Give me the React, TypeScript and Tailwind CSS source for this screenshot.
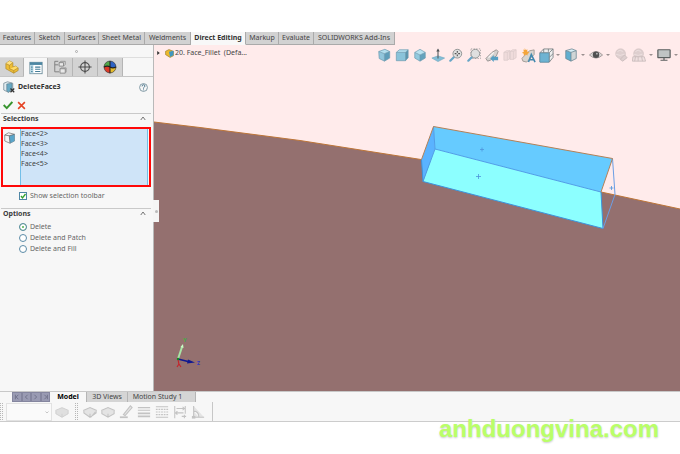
import type { ReactNode } from "react";

const ribbonTabs = [
  { name: "Features", width: "w-[35px]" },
  { name: "Sketch", width: "w-[30px]" },
  { name: "Surfaces", width: "w-[34px]" },
  { name: "Sheet Metal", width: "w-[46px]" },
  { name: "Weldments", width: "w-[46px]" },
  { name: "Direct Editing", width: "w-[55px]" },
  { name: "Markup", width: "w-[33px]" },
  { name: "Evaluate", width: "w-[35px]" },
  { name: "SOLIDWORKS Add-Ins", width: "w-[81px]" },
];

function Icon({ children, size = "size-[14px]" }: { children: ReactNode; size?: string }) {
  return (
    <svg viewBox="0 0 16 16" className={`${size} shrink-0`} fill="none" aria-hidden="true">
      {children}
    </svg>
  );
}

function Cube() {
  return (
    <Icon>
      <path d="M2 4 9 1.500 14.500 4 8.500 6.500Z" fill="#b4dfee" />
      <path d="M2 4 8.500 6.500V15L2.500 12Z" fill="#92c6dc" />
      <path d="M14.500 4 8.500 6.500V15l6-3.500Z" fill="#5f9db9" />
      <path d="M2 4 9 1.500 14.500 4v7.500l-6 3.500-6-3ZM2 4l6.500 2.500 6-2.500M8.500 6.500V15" stroke="#6b9bb0" strokeWidth=".8" />
    </Icon>
  );
}

function FrontCube() {
  return (
    <Icon>
      <path d="M1.500 5 5 2h10l-3 3Z" fill="#b4dfee" />
      <path d="M1.500 5H12v9.500H1.500Z" fill="#8ac3da" />
      <path d="M12 5l3-3v9l-3 3.500Z" fill="#5b95ae" />
      <path d="M1.500 5 5 2h10v9l-3 3.500H1.500ZM1.500 5H12l3-3M12 5v9.500" stroke="#6b9bb0" strokeWidth=".8" />
    </Icon>
  );
}

function IsoCube() {
  return (
    <Icon>
      <path d="M8 1.500 14 5 8 8 2 5Z" fill="#b9e2f0" />
      <path d="M2 5l6 3v7l-6-3.500Z" fill="#92c9de" />
      <path d="M14 5 8 8v7l6-3.500Z" fill="#65a2bd" />
      <path d="M8 1.500 14 5v6.500L8 15l-6-3.500V5ZM2 5l6 3 6-3M8 8v7" stroke="#6b9bb0" strokeWidth=".8" />
    </Icon>
  );
}

function NormalTo() {
  return (
    <Icon>
      <path d="M1 11.500 8 9l7.500 2.500L8 15.500Z" fill="#83bfd8" stroke="#6ba4bd" strokeWidth=".7" />
      <path d="M8 12V2" stroke="#505659" strokeWidth="1.200" />
      <path d="M6 4 8 .5 10 4Z" fill="#505659" />
    </Icon>
  );
}

function ZoomFit({ dashed = false }: { dashed?: boolean }) {
  return (
    <Icon>
      {dashed && <rect x="4.500" y="1" width="11" height="11" stroke="#999" strokeWidth=".9" strokeDasharray="1.500 1.500" />}
      <path d="m1.500 14.500 4-4" stroke="#67a6c7" strokeWidth="2.500" strokeLinecap="round" />
      <circle cx="9.500" cy="6.500" r="5" fill="#dfdfdf" stroke="#929595" strokeWidth="1.100" />
      {!dashed && <path d="M9.500 3.500v6M6.500 6.500h6" stroke="#555" strokeWidth="1.300" strokeDasharray="2 2" />}
    </Icon>
  );
}

function PreviousView() {
  return (
    <Icon>
      <path d="m1 12 7-7 5-3 2 2-2 5-7 5-3 1Z" fill="#d5d1cf" stroke="#918d8b" strokeWidth="1" />
      <path d="m4 11 6-6" stroke="#f7f7f7" strokeWidth="1.500" />
      <path d="m6 12 4-4v2h5v4h-5v2Z" fill="#569fc3" />
    </Icon>
  );
}

function SectionView() {
  return (
    <Icon>
      <path d="M1 5 4 3h4v9l-3 2H1Zm7-1 3-2h4v9l-3 2H8Z" fill="#efdbdb" stroke="#dacaca" strokeWidth=".8" />
      <path d="M5 5v9M12 4v9M1 5h4l3-2M8 4h4l3-2" stroke="#dacaca" strokeWidth=".7" />
    </Icon>
  );
}

function AnnotationView() {
  return (
    <Icon size="size-[15px]">
      <path d="m1 11 8-8 5-1v5l-8 8-4-1Z" fill="#d9d5d0" stroke="#9a948e" strokeWidth=".9" />
      <path d="m4 0 1 2 2-.5-.5 2L9 5l-2 1v2L5 7 3 8.500V6L1 5l2-1-.5-2.500L4 2Z" fill="#f4a53a" />
      <path d="m8 15 3-8 4 8M9.500 12.500h4" stroke="#4389ae" strokeWidth="1.700" />
    </Icon>
  );
}

function ViewOrientation() {
  return (
    <Icon size="size-[15px]">
      <path d="M1 5 5 1h10v9l-4 5H1Z" fill="#eeeeee" stroke="#777f83" strokeWidth=".9" />
      <path d="M1 5h10l4-4M11 5v10M5 1v4M10 1v3M11 10l4-4" stroke="#777f83" strokeWidth=".9" />
      <path d="M1 5.500h9.500V15H1Z" fill="#6eb3d2" stroke="#5795b2" strokeWidth=".8" />
    </Icon>
  );
}

function DisplayStyle() {
  return (
    <Icon>
      <path d="m2 3 7-2 5 2-6 2Z" fill="#d6edf5" />
      <path d="m2 3 6 2v10l-6-3Z" fill="#61aed0" />
      <path d="m14 3-6 2v10l6-3Z" fill="#d0d5d6" />
      <path d="m2 3 7-2 5 2v9l-6 3-6-3ZM2 3l6 2 6-2M8 5v10" stroke="#6b8794" strokeWidth=".9" />
    </Icon>
  );
}

function Eye() {
  return (
    <Icon>
      <path d="M.5 8Q8 0 15.500 8 8 15 .5 8Z" fill="#ddd8d7" stroke="#9a9191" />
      <circle cx="8" cy="7.800" r="3.700" fill="#505050" />
      <circle cx="9" cy="6.500" r="1" fill="#bbb" />
    </Icon>
  );
}

function FadedBall({ scene = false }: { scene?: boolean }) {
  return (
    <Icon>
      <circle cx="7.500" cy="6.500" r="5.500" fill="#decfcf" stroke="#d3c5c5" />
      <path d="M4 4q3-3 6 0M2 7q5 3 10 0" stroke="#ede0e0" />
      {scene ? (
        <path d="M1 10h13l1.500 5H.5Zm3 0-1 5m4-5v5m4-5 1 5" fill="#efe0e0" stroke="#c9bcbc" />
      ) : (
        <path d="m7 13 5-5 3 3-5 4Z" fill="#ddcfcf" stroke="#c9bcbc" />
      )}
    </Icon>
  );
}

function Monitor() {
  return (
    <Icon>
      <rect x="1" y="2" width="14" height="9" rx=".5" fill="#c0c4c4" stroke="#5c6060" strokeWidth="1.400" />
      <path d="M8 11v3M4 14h8" stroke="#5c6060" strokeWidth="1.400" />
    </Icon>
  );
}

const viewTools = [
  { name: "Shaded cube", icon: <Cube />, menu: false },
  { name: "Front view", icon: <FrontCube />, menu: false },
  { name: "Isometric view", icon: <IsoCube />, menu: false },
  { name: "Normal to", icon: <NormalTo />, menu: false },
  { name: "Zoom to fit", icon: <ZoomFit />, menu: false },
  { name: "Zoom to area", icon: <ZoomFit dashed />, menu: false },
  { name: "Previous view", icon: <PreviousView />, menu: false },
  { name: "Section view", icon: <SectionView />, menu: false },
  { name: "Annotation views", icon: <AnnotationView />, menu: false },
  { name: "View orientation", icon: <ViewOrientation />, menu: true },
  { name: "Display style", icon: <DisplayStyle />, menu: true },
  { name: "Hide or show items", icon: <Eye />, menu: true },
  { name: "Edit appearance", icon: <FadedBall />, menu: false },
  { name: "Apply scene", icon: <FadedBall scene />, menu: true },
  { name: "View settings", icon: <Monitor />, menu: true },
];

function ViewToolbar() {
  return (
    <div className="absolute top-0 right-0 flex h-5 items-center">
      {viewTools.map((tool) => (
        <button key={tool.name} aria-label={tool.name} className="flex items-center">
          <span className="flex w-[18px] justify-center">{tool.icon}</span>
          {tool.menu && (
            <svg viewBox="0 0 7 4" className="h-1 w-[7px]" aria-hidden="true">
              <path d="M1 1h4L3 3Z" fill="#9a8f8f" />
            </svg>
          )}
        </button>
      ))}
    </div>
  );
}

function PartIcon() {
  return (
    <Icon>
      <path d="M1 4 5 1l4 2v5l3-1 3 2v3l-5 3-9-5Z" fill="#efbe35" stroke="#b08a2c" strokeWidth=".8" />
      <path d="m1 4 4-3 4 2-4 3Z" fill="#ffe283" />
      <path d="m6 10 6-3 3 2-5 3Z" fill="#ffdc6b" />
      <path d="m1 4 4 2 4-3M5 6v4l5 2 5-3M10 12v3" stroke="#b08a2c" strokeWidth=".8" />
    </Icon>
  );
}

function PropertyIcon() {
  return (
    <Icon>
      <rect x="1" y="1.500" width="14" height="13" fill="#fff" stroke="#6b8c9b" />
      <path d="M1 1.500h14v3H1Z" fill="#4c87a3" />
      <path d="M1.500 4.500H5v9.500H1.500Z" fill="#b4d6e4" />
      <path d="M2.500 7h1.500m-1.500 2.500h1.500M2.500 12h1.500M7 7h6M7 9.500h6M7 12h6" stroke="#447d98" strokeWidth="1.200" />
    </Icon>
  );
}

function ConfigIcon() {
  return (
    <Icon>
      <path d="M6 1.500H2v12h5M2 5.500h4" stroke="#808080" strokeWidth="1.100" />
      <path d="M7 3h5v4H7Zm1 7h6v5H8Z" fill="#e9e9e9" stroke="#858585" />
      <path d="m7 3 2-1.500h5V5l-2 2M8 10l1-1h6v5" stroke="#858585" strokeWidth=".8" />
    </Icon>
  );
}

function TargetIcon() {
  return (
    <Icon>
      <circle cx="8" cy="8" r="5" stroke="#505050" strokeWidth="1.300" />
      <path d="M8 .5v15M.5 8h15" stroke="#484848" strokeWidth="1.200" />
    </Icon>
  );
}

function ColorBallIcon() {
  return (
    <Icon>
      <path d="M8 8V1a7 7 0 0 0-7 7q4-2 7 0Z" fill="#51a849" />
      <path d="M8 8V1a7 7 0 0 1 7 7q-4 2-7 0Z" fill="#2e63c5" />
      <path d="M8 8Q4 6 1 8a7 7 0 0 0 7 7Z" fill="#dd3a28" />
      <path d="M8 8q4 2 7 0a7 7 0 0 1-7 7Z" fill="#e7bd2d" />
      <circle cx="8" cy="8" r="6.800" stroke="#444" strokeWidth=".8" />
      <path d="M1 8q4-2 7 0t7 0M8 1v14" stroke="#202020" strokeWidth="1.200" />
    </Icon>
  );
}

const panelTabs = [
  { name: "Feature tree", icon: <PartIcon /> },
  { name: "Property manager", icon: <PropertyIcon /> },
  { name: "Configurations", icon: <ConfigIcon /> },
  { name: "Dimensions", icon: <TargetIcon /> },
  { name: "Display manager", icon: <ColorBallIcon /> },
];

function SectionHeader({ title }: { title: string }) {
  return (
    <button className="flex h-[10px] w-full items-center justify-between border-t border-[#c9c9c9] pr-[5px] pl-[2px] font-bold text-[#3d3d3d]">
      {title}
      <svg viewBox="0 0 8 6" className="h-[5px] w-[6px]" fill="none" aria-hidden="true">
        <path d="m1 5 3-4 3 4" stroke="#666" strokeWidth="1.200" />
      </svg>
    </button>
  );
}

function PropertyPanel() {
  const deleteModes = ["Delete", "Delete and Patch", "Delete and Fill"];
  return (
    <aside className="relative z-10 w-[154px] shrink-0 border-r border-[#b9b9b9] bg-[#f7f7f7]">
      <div className="flex h-[13px] items-center justify-center border-b border-[#dedede]">
        <span className="size-[3px] rounded-full border border-[#aaa]" />
      </div>
      <div className="flex h-[19px] border-b border-[#c6c6c6]">
        {panelTabs.map((tab, i) => (
          <button
            key={tab.name}
            aria-label={tab.name}
            className={`flex items-center justify-center border-r border-[#b5b5b5] ${
              i === 1 ? "-mb-px w-6 bg-[#f7f7f7]" : i === 0 ? "w-6 bg-[#d3d3d3]" : "w-[25px] bg-[#d3d3d3]"
            }`}
          >
            {tab.icon}
          </button>
        ))}
      </div>
      <div className="flex h-5 items-center gap-[3px] pr-[5px] pl-[3px]">
        <Icon size="size-[12px]">
          <path d="m1 3 5-2 7 2v9l-6 3-6-3Z" fill="#e0ebef" stroke="#6f8693" />
          <path d="m5 4 7-1v8l-5 4-2-2Z" fill="#67a9c4" stroke="#5c7c8b" strokeWidth=".8" />
          <path d="m10 10 5 5m0-5-5 5" stroke="#333" strokeWidth="1.600" />
        </Icon>
        <h1 className="flex-1 font-bold text-[#303030]">DeleteFace3</h1>
        <button aria-label="Help">
          <svg viewBox="0 0 16 16" className="size-[9px]" fill="none" aria-hidden="true">
            <circle cx="8" cy="8" r="7" stroke="#6f8c9a" strokeWidth="1.500" />
            <path d="M5.500 6q0-3 2.500-3t2.500 2.500Q10.500 7 8 8.500V10M8 11.500V13" stroke="#47748c" strokeWidth="1.700" />
          </svg>
        </button>
      </div>
      <div className="flex h-4 items-center gap-1 pl-[3px]">
        <button aria-label="OK">
          <Icon size="size-[10px]">
            <path d="m1 8 5 5L15 3" stroke="#37942e" strokeWidth="3.200" />
          </Icon>
        </button>
        <button aria-label="Cancel">
          <Icon size="size-[9px]">
            <path d="m2 2 12 12M14 2 2 14" stroke="#e54324" strokeWidth="2.800" />
          </Icon>
        </button>
      </div>
      <section className="pr-[2px] pl-px">
        <SectionHeader title="Selections" />
        <div className="mt-1 flex h-[60px] border-2 border-[#ff0808]">
          <div className="w-[17px] pt-[3px] pl-[1px]">
            <Icon size="size-[12px]">
              <path d="m1 4 5-3 8 2v9l-6 3-7-3Z" fill="#f4f4f4" stroke="#777" />
              <path d="m7 5 7-2v9l-6 3Z" fill="#5aa5c9" />
              <path d="m1 4 6 1 7-2M7 5l1 10" stroke="#666" />
            </Icon>
          </div>
          <ul aria-label="Selected faces" className="mr-px flex-1 border-x border-[#72bee8] bg-[#cfe4f8]">
            {[2, 3, 4, 5].map((n) => (
              <li key={n}>{`Face<${n}>`}</li>
            ))}
          </ul>
        </div>
        <label className="mt-[3px] flex h-3 items-center gap-[3px] pl-[18px] text-[#666]">
          <span className="relative size-2">
            <input type="checkbox" defaultChecked className="peer block size-2 appearance-none border border-[#4e86a5] bg-white" />
            <svg viewBox="0 0 8 8" className="pointer-events-none absolute inset-0 hidden peer-checked:block" fill="none" aria-hidden="true">
              <path d="m2 4 1.500 2L6.500 2" stroke="#34a22d" strokeWidth="1.300" />
            </svg>
          </span>
          Show selection toolbar
        </label>
      </section>
      <section className="mt-[6px] pr-[2px] pl-px">
        <SectionHeader title="Options" />
        <div className="mt-[3px] pl-[18px] text-[#666]">
          {deleteModes.map((mode, i) => (
            <label key={mode} className="flex h-[11px] items-center gap-[3px]">
              <input
                type="radio"
                name="delete-mode"
                defaultChecked={i === 0}
                className="size-2 appearance-none rounded-full border border-[#5b8ba7] bg-white checked:bg-[#55b34e] checked:shadow-[inset_0_0_0_2px_white]"
              />
              {mode}
            </label>
          ))}
        </div>
      </section>
      <button aria-label="Collapse panel" className="absolute top-[155px] -right-[6px] flex h-[22px] w-[6px] items-center justify-center bg-[#f5f5f5]">
        <span className="size-[3px] rounded-full bg-[#bbb]" />
      </button>
    </aside>
  );
}

function ModelScene() {
  return (
    <svg
      viewBox="154 45 526 346"
      preserveAspectRatio="xMidYMid slice"
      className="absolute inset-0 size-full"
      role="img"
      aria-label="Model with four selected pocket faces"
    >
      <path d="M100 116 154 122 200 127.500 300 140.500 421 159.500 520 176 601 192 680 209 760 227V460H100Z" fill="#94706f" />
      <path d="M100 116 154 122 200 127.500 300 140.500 421 159.500 520 176 601 192 680 209 760 227" fill="none" stroke="#bd7538" strokeWidth="1" />
      <path d="M433.500 126.500 612.500 158.500 601 192 435 149Z" fill="#66cbff" />
      <path d="M435 149 601 192 603 228.500 423 181.500Z" fill="#8cffff" />
      <path d="M433.500 126.500 435 149 423 181.500 421.500 159.500Z" fill="#5ab3ff" />
      <g fill="none" strokeWidth="1">
        <path d="m433.500 126.500 1.500 22.500L601 192M435 149l-12 32.500" stroke="#4f9ee8" />
        <path d="m421.500 159.500 1.500 22 180 47-2-36.500" stroke="#3d93dc" />
        <path d="m612.500 158.500 2.500 36-12 34" stroke="#6b9ee5" />
        <path d="m421.500 159.500 12-33 179 32L601 192" stroke="#b38158" />
        <path d="M480 149.500h4M482 147.500v4M476 176.500h5M478.500 174v5M609.500 188h4M611.500 186v4" stroke="#4e94dc" strokeWidth=".8" />
      </g>
      <g fill="none">
        <path d="m178 359 4-12" stroke="#a8e5a6" strokeWidth="2" />
        <path d="m180.500 347 2.500-3 .5 4Z" fill="#caffc6" />
        <path d="m178 359 12 3" stroke="#101891" strokeWidth="1.800" />
        <path d="m188 359.500 7 3-8 1Z" fill="#101891" />
        <path d="m178 359 1 6m-2 2 2-3 2 3" stroke="#c4252d" strokeWidth="1.200" />
        <circle cx="178" cy="359" r="1.200" fill="#138b20" />
      </g>
      <text x="183" y="342" fontSize="6" fontWeight="700" fill="#48a847">Y</text>
      <text x="197" y="365" fontSize="5" fontWeight="700" fill="#3037bd">Z</text>
    </svg>
  );
}

function Grip() {
  return <span className="h-[17px] w-[3px] border-x border-dotted border-[#b7b7b7]" />;
}

const sketchTools = [
  { name: "Change layer", art: <><path d="m1 6 7-3 7 3-7 4Z" /><path d="M1 6v3l7 5 7-5V6M8 10v3m1 1 5-6" /></> },
  { name: "Layer properties", art: <><path d="m1 6 7-3 7 3-7 4Z" /><path d="M1 6v4l7 4 7-4V6M8 10v4" /></> },
  { name: "Line color", art: <><path d="m5 11 8-10 2 2-8 9Z" /><path d="M1 14h9" strokeWidth="2" /></> },
  { name: "Line thickness", art: <><path d="M1 3h14M1 6h14" /><path d="M1 9.500h14M1 13h14" strokeWidth="2" /></> },
  { name: "Line style", art: <><path d="M1 2h14M1 14h14" /><path d="M1 5h14M1 8h14M1 11h14" strokeDasharray="2 1" /></> },
  { name: "Hide or show edges", art: <path d="M2 1v14M14 1v9M4 4h9m-2-2 2 2-2 2M4 9h8M5 7 3 9l2 2m5 2h5m-2-2v4" /> },
  { name: "Color display mode", art: <><path d="M3 1v13h12M3 7q6 0 6 7" /><path d="M1 14h4" strokeWidth="3" /></> },
];

function StatusTools() {
  return (
    <div className="flex h-5 items-center gap-[3px] border-b border-[#cccccc]">
      <Grip />
      <div className="relative h-[18px] w-[46px]">
        <select aria-label="Layer" className="size-full appearance-none border border-[#e2e2e2] bg-[#fafafa]" />
        <svg viewBox="0 0 8 5" className="pointer-events-none absolute top-2 right-[3px] w-1" fill="none" aria-hidden="true">
          <path d="m1 1 3 3 3-3" stroke="#aaa" strokeWidth="1.300" />
        </svg>
      </div>
      <button aria-label="Layers" className="mr-[3px] flex w-[14px] justify-center">
        <Icon><g fill="#dfdfdf" stroke="#cdcdcd"><path d="m1 6 7-3 7 3-7 4Z" /><path d="M1 6v4l7 4 7-4V6M8 10v4" /></g></Icon>
      </button>
      <Grip />
      <div className="flex h-full items-center border-r border-[#c7c7c7] pr-[5px]">
        {sketchTools.map((tool) => (
          <button key={tool.name} aria-label={tool.name} className="flex w-[18px] justify-center">
            <Icon><g fill="#e4e4e4" stroke="#c3c3c3" strokeWidth="1.200">{tool.art}</g></Icon>
          </button>
        ))}
      </div>
    </div>
  );
}

export default function App() {
  return (
    <div className="flex min-h-screen flex-col bg-white pt-8 pb-8 font-['Noto_Sans','Open_Sans',sans-serif] text-[7px] leading-[10px] whitespace-nowrap text-[#444]">
      <nav aria-label="Ribbon" className="flex h-[13px] bg-[#ffebeb]">
        {ribbonTabs.map((tab) => (
          <button
            key={tab.name}
            className={`${tab.width} shrink-0 border-r border-b border-[#aaa] text-center ${
              tab.name === "Direct Editing" ? "border-b-transparent bg-[#f8f8f8] font-bold text-[#333]" : "bg-[#d2d2d2]"
            }`}
          >
            {tab.name}
          </button>
        ))}
      </nav>
      <main className="flex flex-1">
        <PropertyPanel />
        <section aria-label="Graphics area" className="relative flex-1 overflow-hidden bg-[#ffebeb]">
          <ModelScene />
          <div className="absolute top-[3px] left-[3px] flex items-center">
            <svg viewBox="0 0 4 6" className="mr-[5px] h-1 w-[3px]" aria-hidden="true">
              <path d="m0 0 4 3-4 3Z" fill="#333" />
            </svg>
            <Icon size="size-[9px]">
              <path d="m1 4 6-3 8 3v8l-6 3-8-5Z" fill="#edb92d" stroke="#8b7224" />
              <path d="m7 5 8-2v8l-6 3Z" fill="#4197c0" />
            </Icon>
            <span className="ml-px">20. Face_Fillet&nbsp; (Defa...</span>
          </div>
          <ViewToolbar />
        </section>
      </main>
      <footer className="relative border-t border-[#c8c8c8] bg-[#f7f7f7]">
        <div className="flex h-[10px] pl-3">
          <div className="flex w-[38px] bg-[#9a9bb3]">
            {["M3 1v6M7 1 4 4l3 3", "M6 1 3 4l3 3", "m3 1 3 3-3 3", "M7 1v6M3 1l3 3-3 3"].map((d, i) => (
              <button key={d} aria-label={["First tab", "Previous tab", "Next tab", "Last tab"][i]} className="flex flex-1 items-center justify-center border border-[#85869f]">
                <svg viewBox="0 0 9 8" className="h-[6px] w-[7px]" fill="none" aria-hidden="true">
                  <path d={d} stroke="#66677f" />
                </svg>
              </button>
            ))}
          </div>
          <button className="w-[36px] text-center font-bold text-black">Model</button>
          <button className="w-[42px] border-x border-[#b5b5b5] bg-[#d5d5d5]">3D Views</button>
          <button className="w-[68px] border-r border-[#b5b5b5] bg-[#d5d5d5] pr-2">Motion Study 1</button>
        </div>
        <StatusTools />
        <p className="absolute right-[21px] -bottom-[20px] font-['Liberation_Sans',Arial,sans-serif] text-[24px] leading-[26px] font-bold text-[#b9ff68] [text-shadow:0_1px_2px_#cccccc]">
          anhduongvina.com
        </p>
      </footer>
    </div>
  );
}
